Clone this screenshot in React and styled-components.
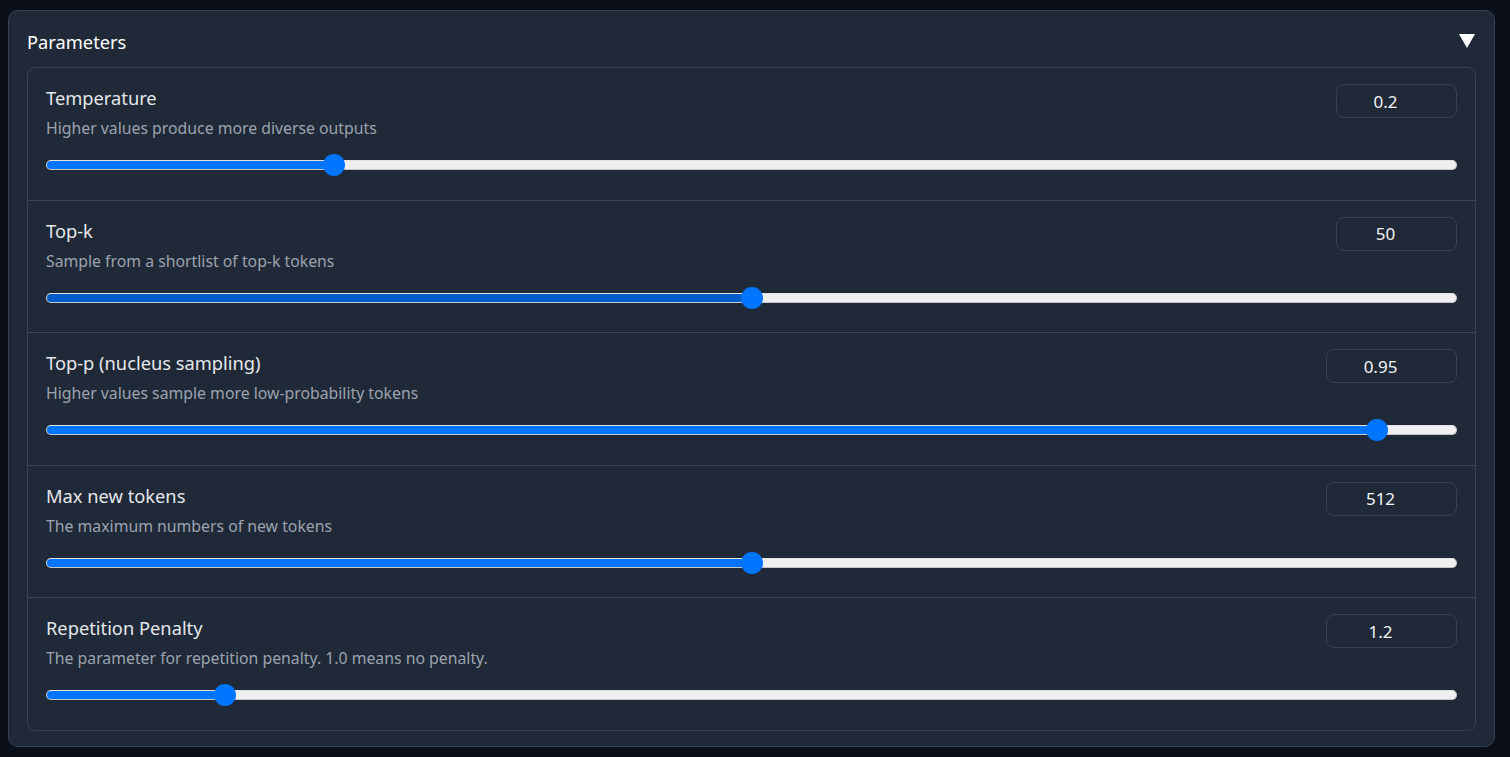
import React from 'react';
import styled, { createGlobalStyle } from 'styled-components';

const GlobalStyle = createGlobalStyle`
    html, body {
        margin: 0;
        padding: 0;
        background: #0b0f19;
    }
    body {
        font-family: "Noto Sans", Lato, sans-serif;
    }
`;

const Page = styled.div`
    padding: 10px 15px 12px 8px;
    min-height: 757px;
    box-sizing: border-box;
    background: #0b0f19;
`;

const Panel = styled.div`
    background: #1f2937;
    border: 1px solid #374151;
    border-radius: 10px;
    padding: 0 18px 15px 18px;
`;

const Header = styled.div`
    display: flex;
    align-items: center;
    justify-content: space-between;
    height: 52px;
    padding-top: 4px;
    padding-right: 1px;
    color: #ffffff;
    font-size: 18.3px;
`;

const Caret = styled.span`
    width: 0;
    height: 0;
    border-left: 8px solid transparent;
    border-right: 8px solid transparent;
    border-top: 14px solid #ffffff;
`;

const List = styled.div`
    border: 1px solid #374151;
    border-radius: 8px;
    overflow: hidden;
`;

const Row = styled.div`
    padding: 16px 18px 23.5px 18px;
    border-top: ${props => (props.first ? 'none' : '1px solid #3b4556')};
`;

const Top = styled.div`
    display: flex;
    justify-content: space-between;
    align-items: flex-start;
`;

const Labels = styled.div`
    display: flex;
    flex-direction: column;
`;

const Title = styled.div`
    font-size: 18.3px;
    line-height: 28px;
    color: #e5e7eb;
`;

const Info = styled.div`
    margin-top: 4px;
    font-size: 15.8px;
    line-height: 24px;
    color: #9ca3af;
`;

const NumberBox = styled.div`
    width: ${props => props.width}px;
    height: 34px;
    box-sizing: border-box;
    padding-right: 22px;
    border: 1px solid #374151;
    border-radius: 8px;
    display: flex;
    align-items: center;
    justify-content: center;
    color: #f3f4f6;
    font-size: 17px;
`;

const Slider = styled.div`
    position: relative;
    margin-top: 14px;
    height: 22px;
    display: flex;
    align-items: center;
`;

const Track = styled.div`
    position: relative;
    width: 100%;
    height: 10px;
    box-sizing: border-box;
    background: #efefef;
    border: 1px solid #c6c6c6;
    border-top-color: #e2e2e2;
    border-radius: 5px;
    overflow: hidden;
`;

const Fill = styled.div`
    position: absolute;
    left: -1px;
    top: -1px;
    bottom: -1px;
    background: ${props => (props.dark ? '#005cc8' : '#0075ff')};
`;

const Thumb = styled.div`
    position: absolute;
    top: 0;
    width: 22px;
    height: 22px;
    margin-left: -11px;
    border-radius: 50%;
    background: #0075ff;
`;

const params = [
    { title: 'Temperature', info: 'Higher values produce more diverse outputs', value: '0.2', pct: 0.2, box: 121 },
    { title: 'Top-k', info: 'Sample from a shortlist of top-k tokens', value: '50', pct: 0.5, box: 121, dark: true },
    { title: 'Top-p (nucleus sampling)', info: 'Higher values sample more low-probability tokens', value: '0.95', pct: 0.95, box: 131 },
    { title: 'Max new tokens', info: 'The maximum numbers of new tokens', value: '512', pct: 0.5, box: 131 },
    { title: 'Repetition Penalty', info: 'The parameter for repetition penalty. 1.0 means no penalty.', value: '1.2', pct: 0.1215, box: 131 },
];

function ParamRow({ p, first }) {
    // thumb centre travels from 10px to width-10px, like a native range
    const pos = `calc(10px + (100% - 20px) * ${p.pct})`;
    return (
        <Row first={first}>
            <Top>
                <Labels>
                    <Title>{p.title}</Title>
                    <Info>{p.info}</Info>
                </Labels>
                <NumberBox width={p.box}>{p.value}</NumberBox>
            </Top>
            <Slider>
                <Track>
                    <Fill dark={p.dark} style={{ width: `calc(${pos} + 1px)` }} />
                </Track>
                <Thumb style={{ left: pos }} />
            </Slider>
        </Row>
    );
}

export default function App() {
    return (
        <Page>
            <GlobalStyle />
            <Panel>
                <Header>
                    <span>Parameters</span>
                    <Caret />
                </Header>
                <List>
                    {params.map((p, i) => (
                        <ParamRow key={p.title} p={p} first={i === 0} />
                    ))}
                </List>
            </Panel>
        </Page>
    );
}
